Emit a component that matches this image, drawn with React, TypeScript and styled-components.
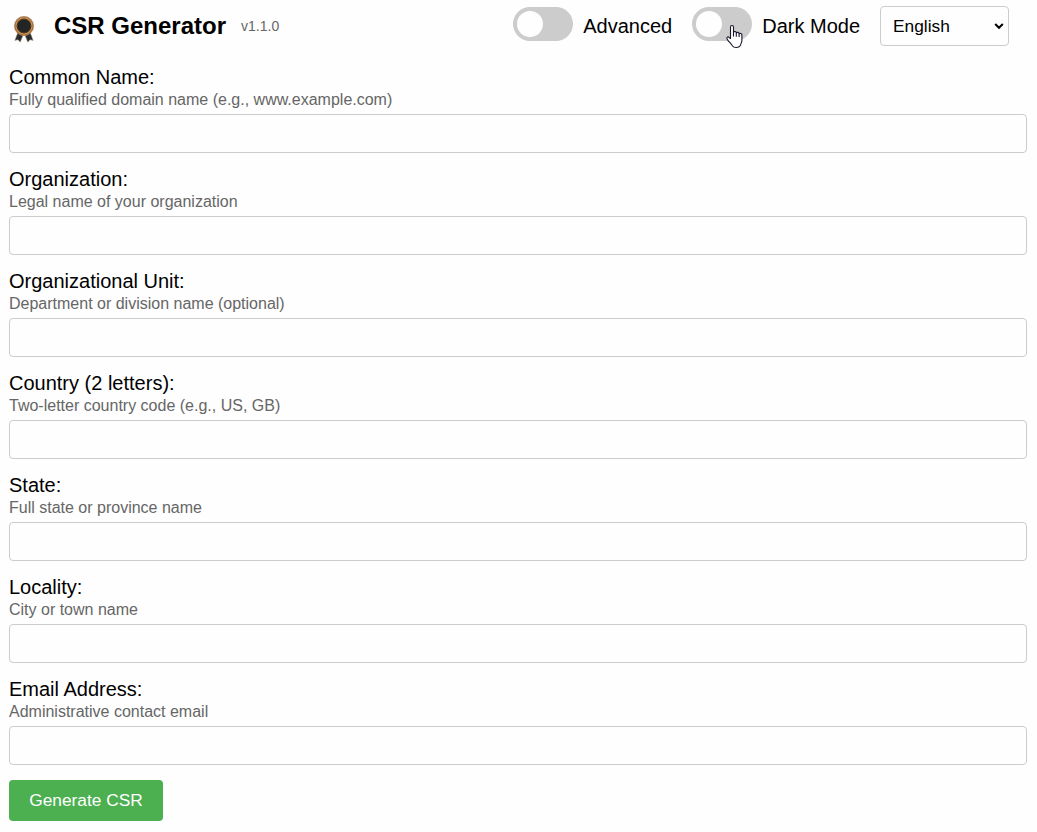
import React from "react";
import styled, { createGlobalStyle } from "styled-components";

const GlobalStyle = createGlobalStyle`
  *, *::before, *::after { box-sizing: border-box; }
  html, body { margin: 0; background: #fefefe; }
  body {
    color: #000;
    font: 20px/23px "Liberation Sans", Arial, sans-serif;
    overflow: hidden;
  }
`;

const Page = styled.main`
  padding: 6px 10px 0 9px;
`;

const Header = styled.header`
  display: flex;
  align-items: center;
  height: 40px;
  padding-right: 18px;
`;

const Logo = styled.svg`
  width: 30px;
  height: 30px;
  margin-top: 4px;
`;

const Title = styled.h1`
  margin: 0 0 0 15px;
  font-size: 24px;
  line-height: 28px;
`;

const Version = styled.span`
  margin-left: 15px;
  color: #666;
  font-size: 14px;
`;

const Controls = styled.div`
  display: flex;
  align-items: center;
  margin-left: auto;
`;

const Toggle = styled.label`
  display: flex;
  align-items: center;
  gap: 10px;
  margin-right: 20px;
`;

const Track = styled.span`
  display: flex;
  width: 60px;
  height: 34px;
  margin-bottom: 4px;
  padding: 4px;
  border-radius: 34px;
  background: #ccc;
  position: relative;
`;

const Knob = styled.span`
  width: 26px;
  height: 26px;
  border-radius: 50%;
  background: #fefefe;
`;

const Pointer = styled.svg`
  position: absolute;
  left: 33px;
  top: 17px;
  width: 18px;
  height: 26px;
`;

const LanguagePicker = styled.div`
  position: relative;
  width: 129px;
  height: 40px;
`;

const Language = styled.select`
  appearance: none;
  width: 100%;
  height: 100%;
  padding: 0 12px;
  border: 1px solid #ccc;
  border-radius: 4px;
  background: #fefefe;
  color: #000;
  font: 17.33px "Liberation Sans", Arial, sans-serif;
`;

const Chevron = styled.svg`
  position: absolute;
  right: 5px;
  top: 16px;
  width: 10px;
  height: 8px;
  pointer-events: none;
`;

const Field = styled.label`
  display: block;
  height: 87px;
  margin-bottom: 15px;
`;

const Name = styled.span`
  display: block;
  height: 24px;
`;

const Hint = styled.small`
  display: block;
  height: 20px;
  margin-bottom: 4px;
  color: #666;
  font-size: 16px;
  line-height: 20px;
`;

const TextInput = styled.input`
  display: block;
  width: 100%;
  height: 39px;
  padding: 8px;
  border: 1px solid #ccc;
  border-radius: 4px;
  background: #fefefe;
  font: inherit;
`;

const Form = styled.form`
  padding-top: 20px;
`;

const Submit = styled.button`
  display: block;
  width: 154px;
  height: 41px;
  padding: 0;
  border: 0;
  border-radius: 4px;
  background: #4caf50;
  color: #fff;
  font: 17.33px "Liberation Sans", Arial, sans-serif;
`;

const fields = [
  ["Common Name:", "Fully qualified domain name (e.g., www.example.com)"],
  ["Organization:", "Legal name of your organization"],
  ["Organizational Unit:", "Department or division name (optional)"],
  ["Country (2 letters):", "Two-letter country code (e.g., US, GB)"],
  ["State:", "Full state or province name"],
  ["Locality:", "City or town name"],
  ["Email Address:", "Administrative contact email"],
];

function Rosette() {
  return (
    <Logo viewBox="0 0 30 30">
      <path
        d="M9 19 5.8 27.4l3.2-.7 2.2 2.5 3.1-7.4h1.4l3.1 7.4 2.2-2.5 3.2.7L21 19z"
        fill="#292b2d" stroke="#b9a58f" strokeWidth=".5"
      />
      <circle cx="15" cy="13" r="9.6" fill="#8a5a30" stroke="#b98a5c" strokeWidth=".8" />
      <circle cx="15" cy="13" r="8.1" fill="none" stroke="#d19a58" strokeWidth="1.1" />
      <circle cx="15" cy="13" r="6.8" fill="#222426" stroke="#4a3421" strokeWidth="1" />
    </Logo>
  );
}

function HandPointer() {
  return (
    <Pointer viewBox="0 0 18 26">
      <path
        d="M5.5 14.5V3.2c0-2.3 3-2.3 3 0v5c.6-1.1 2.7-.8 2.8.7.8-1 2.7-.6 2.8.8 1-.8 2.8-.2 2.8 1.3v5.5c0 2-1.2 3.3-1.6 5-1.6 2.7-6.4 2.7-8 .2-.8-2-3.7-3.7-5.2-6.8-.9-1.7.8-2.5 1.9-1.5z"
        fill="#fff" stroke="#17172b" strokeWidth="1.1" strokeLinejoin="round"
      />
      <path d="M8.5 8v4.5M11.3 9v3.7M14.1 10v3" fill="none" stroke="#17172b" strokeWidth="1.1" />
    </Pointer>
  );
}

export default function App() {
  return (
    <>
      <GlobalStyle />
      <Page>
        <Header>
          <Rosette />
          <Title>CSR Generator</Title>
          <Version>v1.1.0</Version>
          <Controls>
            <Toggle><Track><Knob /></Track>Advanced</Toggle>
            <Toggle><Track><Knob /><HandPointer /></Track>Dark Mode</Toggle>
            <LanguagePicker>
              <Language aria-label="Language"><option>English</option></Language>
              <Chevron viewBox="0 0 10 8">
                <path d="M1.2 2 5 5.8 8.8 2" fill="none" stroke="#000" strokeWidth="2" />
              </Chevron>
            </LanguagePicker>
          </Controls>
        </Header>
        <Form>
          {fields.map(([name, hint]) => (
            <Field key={name}>
              <Name>{name}</Name>
              <Hint>{hint}</Hint>
              <TextInput />
            </Field>
          ))}
          <Submit type="button">Generate CSR</Submit>
        </Form>
      </Page>
    </>
  );
}
